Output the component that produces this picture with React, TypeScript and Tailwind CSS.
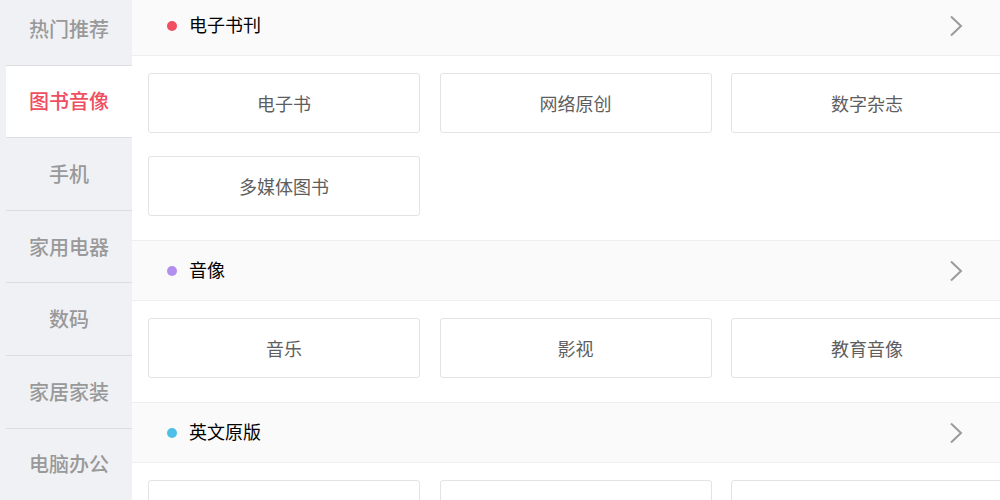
import React from 'react';

const menu = ['热门推荐', '图书音像', '手机', '家用电器', '数码', '家居家装', '电脑办公'];

const sections = [
  { title: '电子书刊', dot: 'bg-[#ef4f60]', items: ['电子书', '网络原创', '数字杂志', '多媒体图书'] },
  { title: '音像', dot: 'bg-[#b28ef0]', items: ['音乐', '影视', '教育音像'] },
  { title: '英文原版', dot: 'bg-[#4ec0e8]', items: ['少儿', '商务投资', '英语学习与考试'] },
];

function Chevron() {
  return (
    <svg width="14" height="22" viewBox="0 0 14 22" fill="none">
      <path d="M2 1.5 L12 11 L2 20.5" stroke="#9a9a9a" strokeWidth="2" />
    </svg>
  );
}

export default function App() {
  return (
    <div
      className="flex h-[500px] w-[1000px] overflow-hidden bg-white"
      style={{ fontFamily: '"Noto Sans CJK SC", "Liberation Sans", sans-serif' }}
    >
      <div className="w-[132px] shrink-0 bg-[#f0f1f5]">
        <div className="-mt-[7px] pl-[6px]">
          {menu.map((name, i) => (
            <div
              key={name}
              className={`flex h-[72.6px] items-center justify-center border-b border-[#dcdde0] text-[20px] font-medium ${
                i === 1 ? 'bg-white text-[#ee4e5f]' : 'text-[#999999]'
              }`}
            >
              {name}
            </div>
          ))}
        </div>
      </div>

      <div className="flex-1 overflow-hidden">
        <div className="-mt-[5px] w-[888px]">
          {sections.map((s) => (
            <div key={s.title}>
              <div className="flex h-[61px] items-center justify-between border-y border-[#eeeeee] bg-[#fafafa] pl-[35px] pr-[57px]">
                <div className="flex items-center gap-[12px]">
                  <span className={`h-[10px] w-[10px] rounded-full ${s.dot}`} />
                  <span className="-mt-[2px] text-[18px] text-black">{s.title}</span>
                </div>
                <Chevron />
              </div>
              <div className="grid grid-cols-[repeat(3,272px)] gap-x-[19.5px] gap-y-[23px] px-[16px] pt-[17px] pb-[24px]">
                {s.items.map((it) => (
                  <div
                    key={it}
                    className="flex h-[60px] items-center justify-center rounded-[3px] border border-[#e3e3e3] bg-white text-[18px] text-[#5e5e5e]"
                  >
                    {it}
                  </div>
                ))}
              </div>
            </div>
          ))}
        </div>
      </div>
    </div>
  );
}
